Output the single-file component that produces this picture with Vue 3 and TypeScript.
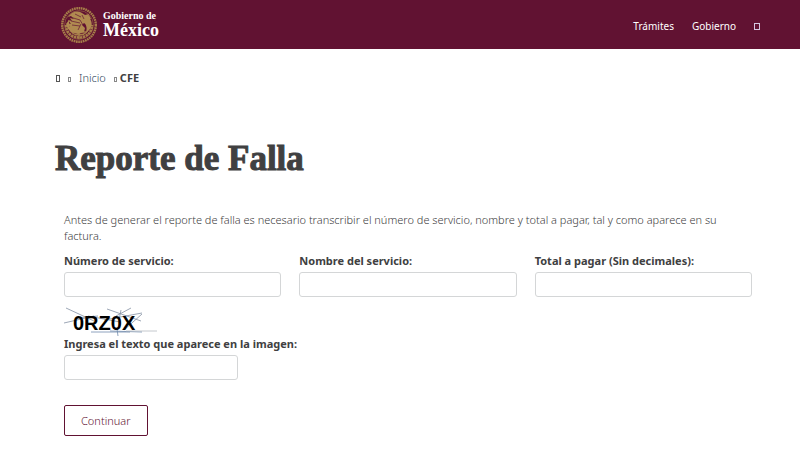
<script setup lang="ts">
import { ref } from 'vue'

interface Field {
  id: string
  label: string
}

const fields: Field[] = [
  { id: 'numero', label: 'Número de servicio:' },
  { id: 'nombre', label: 'Nombre del servicio:' },
  { id: 'total', label: 'Total a pagar (Sin decimales):' },
]

const values = ref<Record<string, string>>({ numero: '', nombre: '', total: '' })
const captcha = ref('')
</script>

<template>
  <header class="topbar">
    <a class="brand" href="#" aria-label="Gobierno de México">
      <svg class="seal" viewBox="0 0 38 38" aria-hidden="true">
        <g fill="none" stroke="#a67e49">
          <circle cx="19" cy="19" r="16.8" stroke-width="2.4" stroke-dasharray="1.7 .6" />
          <circle cx="19" cy="19" r="14.4" stroke-width=".5" />
          <path d="M6 19c0 8 6 12.5 13 12.5s13-4.5 13-12.5" stroke-width="2.6" stroke-dasharray="2.4 .6" />
          <path d="M9 22c2 5 6 7 10 7s8-2 10-7" stroke-width="1.2" />
          <path d="M13 26h13M15 28.5h9M19 25v8" stroke-width="1.3" />
        </g>
        <g fill="#b08a50">
          <path d="M8 11c3-5 9-7 14-4l3 2 4-1-1 3c4 3 5 8 2 12l-4 4c1-4 1-8-2-10l-2 2 3 3-1 4-6 2-7-2-4-6 3 1-3-4 4 1-3-4 4 1-2-3 4 1-3-3z" />
          <path d="M9 14l-3 4 2 5 5 4-1-5-3-2zM25 11l4-2 2 4-3 1zM14 26l3-4 3 1-2 4z" />
        </g>
        <path d="M10 11l10 3 3 5M11 15l9 2M12 19l8 1M22 9l2 4M21 18l-3 6M15 8l6 3" fill="none" stroke="#611232" stroke-width=".7" />
      </svg>
      <span class="wordmark">
        <span class="small">Gobierno de</span>
        <span class="large">México</span>
      </span>
    </a>
    <nav class="links">
      <a href="#">Trámites</a>
      <a href="#">Gobierno</a>
      <a href="#" aria-label="Buscar"><i class="glyph search"></i></a>
    </nav>
  </header>

  <main class="page">
    <nav class="crumbs">
      <a href="#" aria-label="Portada"><i class="glyph"></i></a>
      <i class="glyph tiny"></i>
      <a class="home" href="#">Inicio</a>
      <i class="glyph tiny"></i>
      <strong>CFE</strong>
    </nav>

    <h1>Reporte de Falla</h1>

    <form class="form" @submit.prevent>
      <p>
        Antes de generar el reporte de falla es necesario transcribir el número de servicio, nombre y total a pagar, tal y como aparece en su factura.
      </p>
      <div class="row">
        <div v-for="f in fields" :key="f.id" class="field">
          <label :for="f.id">{{ f.label }}</label>
          <input :id="f.id" v-model="values[f.id]" type="text" />
        </div>
      </div>
      <svg class="captcha" viewBox="0 0 94 32" role="img" aria-label="0RZ0X">
        <g fill="none" stroke="#8490a3" stroke-width=".8">
          <path d="M2 4l28 13M0 19l30-7M12 14l22-2M43 5l34 12M52 12l15-8M40 16l38-7M57 6l-2 10M78 10L60 26M24 12l32 6" />
          <path d="M27 28h39M46 27l32 1M53 25l1 7" stroke="#718bad" />
          <path d="M62 27h31" stroke="#b5bac0" />
        </g>
        <text x="9" y="26">0RZ0X</text>
      </svg>
      <div class="field verify">
        <label for="captcha">Ingresa el texto que aparece en la imagen:</label>
        <input id="captcha" v-model="captcha" type="text" />
      </div>
      <button type="submit">Continuar</button>
    </form>
  </main>
</template>

<style>
body {
  margin: 0;
  background: #fff;
}
</style>

<style scoped>
.topbar,
.page {
  font-family: "Noto Sans", sans-serif;
  font-size: 11px;
  line-height: 16px;
  color: #404041;
}
.topbar {
  display: flex;
  align-items: center;
  justify-content: space-between;
  height: 49px;
  padding: 0 40px 0 60px;
  background: #611232;
}
a {
  color: inherit;
  text-decoration: none;
}
.brand {
  display: flex;
  align-items: center;
  gap: 5px;
  color: #fff;
}
.seal {
  width: 38px;
  height: 38px;
}
.wordmark {
  display: flex;
  flex-direction: column;
  font-family: "Liberation Serif", serif;
  font-weight: 700;
}
.small {
  font-size: 10px;
  line-height: 11px;
}
.large {
  font-size: 18px;
  line-height: 18px;
}
.links {
  display: flex;
  align-items: center;
  gap: 18px;
  padding-top: 2px;
  font-size: 10px;
  color: #fff;
}
.glyph {
  display: inline-block;
  box-sizing: border-box;
  width: 4px;
  height: 7px;
  border: 1px solid #555;
}
.tiny {
  width: 3px;
  height: 5px;
  margin-top: 3px;
  border-color: #888;
}
.search {
  width: 6px;
  border-color: #d5c5df;
}
.page {
  padding: 21px 48px 37px 55px;
}
.crumbs {
  display: flex;
  align-items: center;
  gap: 8px;
  padding-left: 1px;
  font-weight: 300;
}
.crumbs strong {
  margin-left: -5px;
  font-weight: 700;
}
.home {
  color: #32475c;
}
h1 {
  margin: 51px 0 31px;
  font-family: "Liberation Serif", serif;
  font-size: 35px;
  font-weight: 700;
  line-height: 44px;
  -webkit-text-stroke: 1px #404041;
}
.form {
  display: flex;
  flex-direction: column;
  align-items: flex-start;
  padding-left: 9px;
}
p {
  margin: 0 0 9px;
  font-weight: 300;
}
.row {
  display: grid;
  grid-template-columns: repeat(3, 1fr);
  gap: 18px;
  width: 100%;
}
.field {
  display: flex;
  flex-direction: column;
  gap: 3px;
}
label {
  font-weight: 700;
}
input {
  box-sizing: border-box;
  width: 100%;
  height: 25px;
  padding: 4px 8px;
  border: 1px solid #d4d6d7;
  border-radius: 3px;
  background: #fff;
  font: inherit;
  color: inherit;
}
.captcha {
  width: 94px;
  height: 32px;
  margin-top: 7px;
}
.captcha text {
  font: 700 20px "Liberation Sans", sans-serif;
  fill: #000;
}
.verify input {
  width: 174px;
}
button {
  margin-top: 25px;
  height: 31px;
  padding: 0 16px;
  border: 1px solid #611232;
  border-radius: 2px;
  background: #fff;
  font: inherit;
  font-weight: 300;
  color: #611232;
}
</style>
